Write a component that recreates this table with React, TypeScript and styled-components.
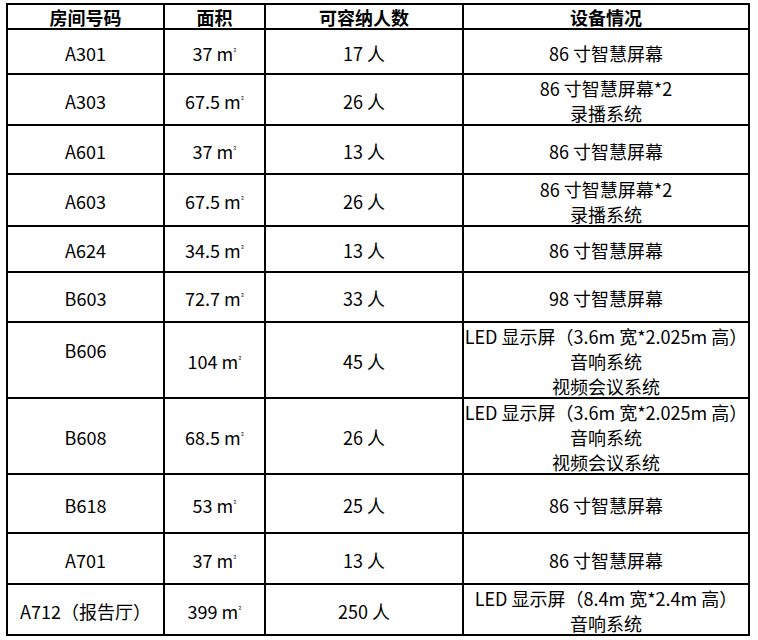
import React from "react";
import styled, { createGlobalStyle } from "styled-components";

type Room = {
  code: string;
  area: string;
  seats: string;
  devices: string[];
  height: number;
  codeTop?: boolean;
};

const rooms: Room[] = [
  { code: "A301", area: "37", seats: "17", devices: ["86 寸智慧屏幕"], height: 45 },
  { code: "A303", area: "67.5", seats: "26", devices: ["86 寸智慧屏幕*2", "录播系统"], height: 51 },
  { code: "A601", area: "37", seats: "13", devices: ["86 寸智慧屏幕"], height: 49 },
  { code: "A603", area: "67.5", seats: "26", devices: ["86 寸智慧屏幕*2", "录播系统"], height: 52 },
  { code: "A624", area: "34.5", seats: "13", devices: ["86 寸智慧屏幕"], height: 46 },
  { code: "B603", area: "72.7", seats: "33", devices: ["98 寸智慧屏幕"], height: 50 },
  {
    code: "B606",
    area: "104",
    seats: "45",
    devices: ["LED 显示屏（3.6m 宽*2.025m 高）", "音响系统", "视频会议系统"],
    height: 76,
    codeTop: true,
  },
  {
    code: "B608",
    area: "68.5",
    seats: "26",
    devices: ["LED 显示屏（3.6m 宽*2.025m 高）", "音响系统", "视频会议系统"],
    height: 76,
  },
  { code: "B618", area: "53", seats: "25", devices: ["86 寸智慧屏幕"], height: 59 },
  { code: "A701", area: "37", seats: "13", devices: ["86 寸智慧屏幕"], height: 51 },
  {
    code: "A712（报告厅）",
    area: "399",
    seats: "250",
    devices: ["LED 显示屏（8.4m 宽*2.4m 高）", "音响系统"],
    height: 51,
  },
];

const headers = ["房间号码", "面积", "可容纳人数", "设备情况"];

const App: React.FC = () => {
  const rows = [25, ...rooms.map((r) => r.height)].map((h) => `${h}px`).join(" ");

  return (
    <>
      <GlobalStyle />
      <Table role="table" $rows={rows}>
        {headers.map((h) => (
          <HeadCell key={h} role="columnheader">
            {h}
          </HeadCell>
        ))}
        {rooms.map((room) => (
          <React.Fragment key={room.code}>
            <Cell role="cell" $top={room.codeTop}>
              <Line>{room.code}</Line>
            </Cell>
            <Cell role="cell">
              <Line>
                {room.area} m<Sup>²</Sup>
              </Line>
            </Cell>
            <Cell role="cell">
              <Line>{room.seats} 人</Line>
            </Cell>
            <Cell role="cell">
              {room.devices.map((line) => (
                <Line key={line}>{line}</Line>
              ))}
            </Cell>
          </React.Fragment>
        ))}
      </Table>
    </>
  );
};

const GlobalStyle = createGlobalStyle`
  html, body {
    margin: 0;
    padding: 0;
    background: #ffffff;
  }
  body {
    padding: 3px 0 0 6px;
    color: #000000;
    font-family: "Noto Sans CJK SC", sans-serif;
  }
`;

const Table = styled.div<{ $rows: string }>`
  display: grid;
  grid-template-columns: 157px 101px 198px 286px;
  grid-template-rows: ${({ $rows }) => $rows};
  width: max-content;
  border-top: 2px solid #000;
  border-left: 2px solid #000;
`;

const CellBase = styled.div`
  display: flex;
  flex-direction: column;
  align-items: center;
  justify-content: center;
  border-right: 2px solid #000;
  border-bottom: 2px solid #000;
  font-family: "Noto Sans CJK SC", sans-serif;
  font-size: 18px;
  text-align: center;
  white-space: nowrap;
`;

const HeadCell = styled(CellBase)`
  font-weight: 700;
  line-height: 20px;
  padding-top: 1px;
`;

const Cell = styled(CellBase)<{ $top?: boolean }>`
  line-height: 25px;
  padding: ${({ $top }) => ($top ? "0 0 20px" : "3px 0 0")};
`;

const Line = styled.span`
  display: block;
`;

const Sup = styled.span`
  position: relative;
  top: -6px;
  font-size: 8px;
  line-height: 0;
`;

export default App;
